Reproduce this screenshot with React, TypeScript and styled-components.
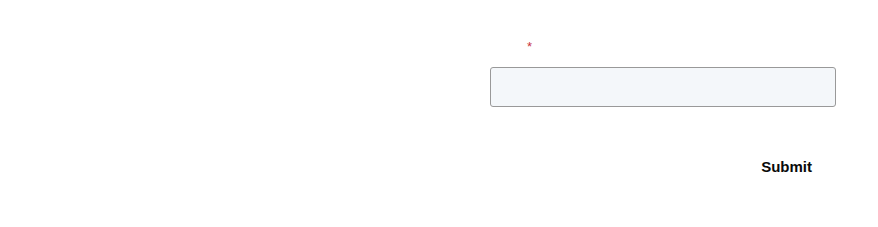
import React from 'react';
import styled, { createGlobalStyle } from 'styled-components';

const Global = createGlobalStyle`
  body {
    margin: 0;
    background: #fff;
    font-family: "Liberation Sans", Arial, sans-serif;
  }
`;

const Page = styled.div`
  display: grid;
  grid-template-columns: 1fr 346px;
  padding: 37px 42px 0 0;
`;

const Form = styled.form`
  grid-column: 2;
  display: flex;
  flex-direction: column;
`;

const Label = styled.label`
  display: flex;
  height: 20px;
  padding-left: 37px;
  margin-bottom: 10px;
  font-size: 13px;
  color: #fff;
`;

const Required = styled.span`
  color: #c8323a;
  font-size: 13px;
  line-height: 20px;
`;

const Input = styled.input`
  box-sizing: border-box;
  height: 40px;
  width: 100%;
  border: 1px solid #999;
  border-radius: 3px;
  background: #f4f7fa;
  outline: none;
`;

const Actions = styled.div`
  display: flex;
  justify-content: flex-end;
  margin-top: 43px;
`;

const Button = styled.button`
  border: none;
  background: transparent;
  padding: 8px 24px;
  font-family: "Liberation Sans", Arial, sans-serif;
  font-weight: bold;
  font-size: 15px;
  color: #0a0a0a;
  cursor: pointer;
`;

function App() {
  return (
    <>
      <Global />
      <Page>
        <Form onSubmit={(e) => e.preventDefault()}>
          <Label>
            <Required>*</Required>
          </Label>
          <Input type="text" />
          <Actions>
            <Button type="submit">Submit</Button>
          </Actions>
        </Form>
      </Page>
    </>
  );
}

export default App;
